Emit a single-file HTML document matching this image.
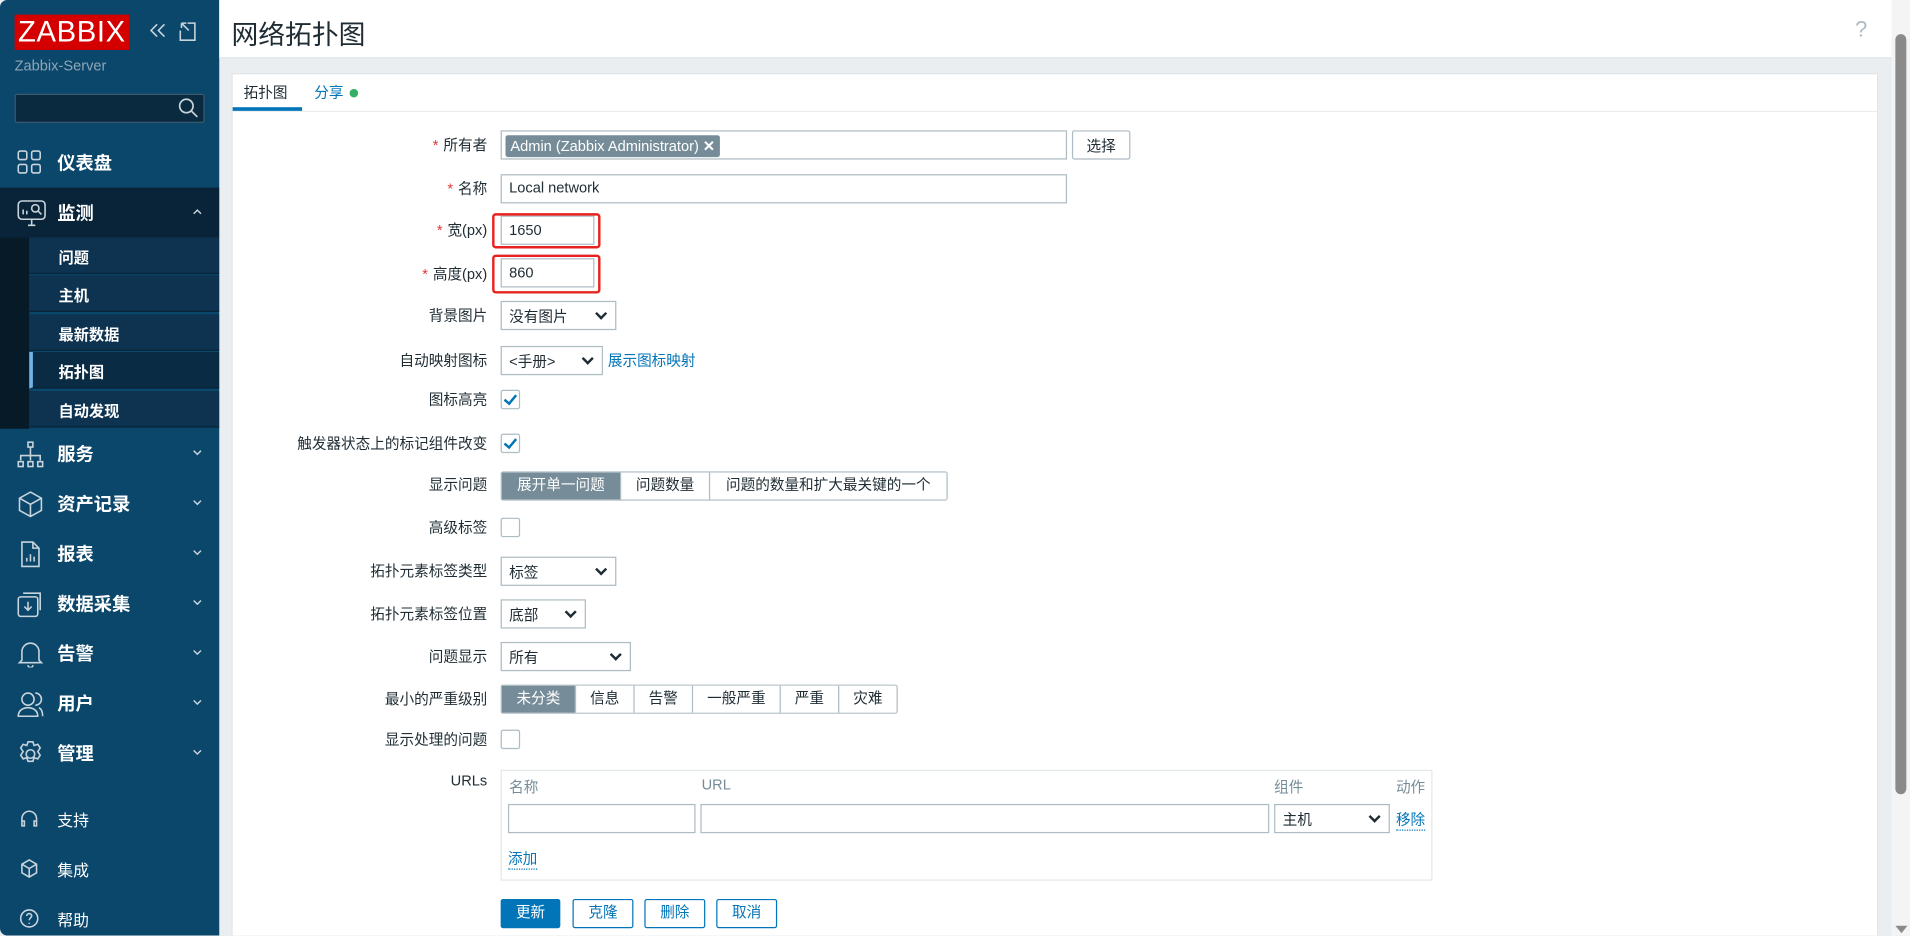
<!DOCTYPE html>
<html><head><meta charset="utf-8"><style>
*{box-sizing:border-box;margin:0;padding:0}
html,body{width:1910px;height:935px;overflow:hidden;background:#ebeef0}
#w{position:absolute;left:0;top:0;width:1568px;height:768px;overflow:hidden;transform:scale(1.2181);transform-origin:0 0;font-family:"Liberation Sans","Noto Sans CJK SC",sans-serif;font-size:12px;color:#1f2c33}
.a{position:absolute}
#sb{left:0;top:0;width:180px;height:768px;background:#0b466b;border-radius:6px 0 0 6px;overflow:hidden}
.nav{position:absolute;left:0;width:180px;height:41px;color:#fff;font-size:15px;font-weight:bold}
.nav span{position:absolute;left:47px;top:10px}
.nav svg{position:absolute;left:14px;top:10px}
.nav svg.car{left:158px;top:17px}
.sub{position:absolute;left:24px;width:156px;height:30px;background:#0e3350;border-bottom:1px solid #082436;color:#fff;font-size:12.5px;font-weight:bold;padding:6px 0 0 24px}
.lab{position:absolute;right:1168px;font-size:12px;color:#1f2c33;text-align:right;white-space:nowrap}
.lab i{color:#e33734;font-style:normal;margin-right:4px}
.inp{position:absolute;height:24px;border:1px solid #adbbc3;background:#fff;padding:3px 6px;font-size:12px}
.sel::after{content:"";position:absolute;right:8px;top:6px;width:5px;height:5px;border-right:2px solid #1f2c33;border-bottom:2px solid #1f2c33;transform:rotate(45deg)}
.cb{position:absolute;left:411px;width:16px;height:16px;border:1px solid #adbbc3;border-radius:2px;background:#fff}
.cb.c::after{content:"";position:absolute;left:4px;top:1px;width:4px;height:8px;border-right:2px solid #0275b8;border-bottom:2px solid #0275b8;transform:rotate(40deg)}
.seg{position:absolute;height:24px;display:flex;border:1px solid #adbbc3;border-radius:2px}
.seg div{padding:0 11px;line-height:21px;border-left:1px solid #adbbc3;background:#fff;text-align:center}
.seg div:first-child{border-left:none;background:#768d99;color:#fff}
.btn{position:absolute;top:738px;height:24px;border:1px solid #0275b8;border-radius:2px;color:#0275b8;background:#fff;text-align:center;line-height:21px;width:50px}
.lnk{color:#0275b8}
</style></head><body><div id="w">
<div id="sb" class="a">
 <div class="a" style="left:12px;top:12px;width:94px;height:29px;background:#d40000;color:#fff;font-size:24px;line-height:29px;text-align:center;letter-spacing:0.5px">ZABBIX</div>
 <svg class="a" style="left:123px;top:19px" width="14" height="12" viewBox="0 0 14 12" fill="none" stroke="#c8d4dc" stroke-width="1.3"><path d="M6 1L1 6l5 5M12 1L7 6l5 5"/></svg>
 <svg class="a" style="left:147px;top:18px" width="15" height="16" viewBox="0 0 15 16" fill="none" stroke="#c8d4dc" stroke-width="1.3"><path d="M2 1h4M2 1v4M2 1l6 6M7 1h6v14H1V7"/></svg>
 <div class="a" style="left:12px;top:47px;color:#8ea6b6;font-size:12px">Zabbix-Server</div>
 <div class="a" style="left:12px;top:77px;width:156px;height:24px;background:#0a2a40;border:1px solid #3a5a70;border-radius:2px"></div>
 <svg class="a" style="left:146px;top:80px" width="17" height="17" viewBox="0 0 17 17" fill="none" stroke="#c8d4dc" stroke-width="1.4"><circle cx="7" cy="7" r="5.5"/><path d="M11 11l5 5"/></svg>
 <div class="nav" style="top:113px"><svg width="20" height="20" viewBox="0 0 20 20" fill="none" stroke="#c8d4dc" stroke-width="1.3"><rect x="1" y="1" width="7" height="7" rx="1.5"/><rect x="12" y="1" width="7" height="7" rx="1.5"/><rect x="1" y="12" width="7" height="7" rx="1.5"/><rect x="12" y="12" width="7" height="7" rx="1.5"/></svg><span>仪表盘</span></div>
 <div class="nav" style="top:154px;background:#092438;height:41px"><svg width="24" height="22" viewBox="0 0 24 22" fill="none" stroke="#c8d4dc" stroke-width="1.3"><rect x="1" y="1" width="22" height="15" rx="3"/><path d="M5 12V8M8 12V9M9 21h6M12 16v5"/><circle cx="15" cy="7" r="3"/><path d="M17 9l3 3"/></svg><span>监测</span><svg class="car" width="8" height="5" viewBox="0 0 8 5" fill="none" stroke="#c8d4dc" stroke-width="1.2"><path d="M1 4.5L4 1.5 7 4.5"/></svg></div>
 <div class="a" style="left:0;top:195px;width:24px;height:157px;background:#061a28"></div>
 <div class="sub" style="top:195px">问题</div>
 <div class="sub" style="top:226px">主机</div>
 <div class="sub" style="top:258px">最新数据</div>
 <div class="sub" style="top:289px;background:#0a2b44;border-left:3px solid #6eb4e8;padding-left:21px">拓扑图</div>
 <div class="sub" style="top:321px">自动发现</div>
 <div class="nav" style="top:352px"><svg width="22" height="22" viewBox="0 0 22 22" fill="none" stroke="#c8d4dc" stroke-width="1.3"><rect x="9" y="1" width="4" height="4"/><path d="M11 5v5M3 16v-4h16v4M11 10v6"/><rect x="1" y="17" width="4" height="4"/><rect x="9" y="17" width="4" height="4"/><rect x="17" y="17" width="4" height="4"/></svg><span>服务</span><svg class="car" width="8" height="5" viewBox="0 0 8 5" fill="none" stroke="#c8d4dc" stroke-width="1.2"><path d="M1 1l3 3 3-3"/></svg></div>
 <div class="nav" style="top:393px"><svg width="22" height="22" viewBox="0 0 22 22" fill="none" stroke="#c8d4dc" stroke-width="1.3"><path d="M11 1l9 5v10l-9 5-9-5V6zM2 6l9 5 9-5M11 11v10"/></svg><span>资产记录</span><svg class="car" width="8" height="5" viewBox="0 0 8 5" fill="none" stroke="#c8d4dc" stroke-width="1.2"><path d="M1 1l3 3 3-3"/></svg></div>
 <div class="nav" style="top:434px"><svg width="22" height="22" viewBox="0 0 22 22" fill="none" stroke="#c8d4dc" stroke-width="1.3"><path d="M4 1h9l5 5v15H4zM13 1v5h5M8 17v-3M11 17v-6M14 17v-4"/></svg><span>报表</span><svg class="car" width="8" height="5" viewBox="0 0 8 5" fill="none" stroke="#c8d4dc" stroke-width="1.2"><path d="M1 1l3 3 3-3"/></svg></div>
 <div class="nav" style="top:475px"><svg width="22" height="22" viewBox="0 0 22 22" fill="none" stroke="#c8d4dc" stroke-width="1.3"><rect x="1" y="5" width="16" height="16" rx="2"/><path d="M5 2h14v14M9 9v7M6 13l3 3 3-3"/></svg><span>数据采集</span><svg class="car" width="8" height="5" viewBox="0 0 8 5" fill="none" stroke="#c8d4dc" stroke-width="1.2"><path d="M1 1l3 3 3-3"/></svg></div>
 <div class="nav" style="top:516px"><svg width="22" height="22" viewBox="0 0 22 22" fill="none" stroke="#c8d4dc" stroke-width="1.3"><path d="M4 16V9a7 7 0 0114 0v7l2 2H2zM9 20a2 2 0 004 0"/></svg><span>告警</span><svg class="car" width="8" height="5" viewBox="0 0 8 5" fill="none" stroke="#c8d4dc" stroke-width="1.2"><path d="M1 1l3 3 3-3"/></svg></div>
 <div class="nav" style="top:557px"><svg width="22" height="22" viewBox="0 0 22 22" fill="none" stroke="#c8d4dc" stroke-width="1.3"><circle cx="9" cy="7" r="5"/><path d="M1 21c0-5 4-7 8-7s8 2 8 7zM15 2a5 5 0 010 10M18 14c2 1 3 3 3 7"/></svg><span>用户</span><svg class="car" width="8" height="5" viewBox="0 0 8 5" fill="none" stroke="#c8d4dc" stroke-width="1.2"><path d="M1 1l3 3 3-3"/></svg></div>
 <div class="nav" style="top:598px"><svg width="22" height="22" viewBox="0 0 22 22" fill="none" stroke="#c8d4dc" stroke-width="1.3"><circle cx="11" cy="11" r="3.5"/><path d="M9 1h4l1 3 3-1 2 3-2 3 2 3-2 3-3-1-1 3H9l-1-3-3 1-2-3 2-3-2-3 2-3 3 1z"/></svg><span>管理</span><svg class="car" width="8" height="5" viewBox="0 0 8 5" fill="none" stroke="#c8d4dc" stroke-width="1.2"><path d="M1 1l3 3 3-3"/></svg></div>
 <div class="nav" style="top:652px;font-size:13px;font-weight:normal"><svg width="16" height="16" viewBox="0 0 16 16" fill="none" stroke="#c8d4dc" stroke-width="1.3" style="left:16px;top:12px"><path d="M2 11V8a6 6 0 0112 0v3M2 10h2v4H2zM12 10h2v4h-2z"/></svg><span style="top:11px">支持</span></div>
 <div class="nav" style="top:693px;font-size:13px;font-weight:normal"><svg width="16" height="16" viewBox="0 0 16 16" fill="none" stroke="#c8d4dc" stroke-width="1.3" style="left:16px;top:12px"><path d="M8 1l6 3.5v7L8 15l-6-3.5v-7zM2 4.5L8 8l6-3.5M8 8v7"/></svg><span style="top:11px">集成</span></div>
 <div class="nav" style="top:734px;font-size:13px;font-weight:normal"><svg width="16" height="16" viewBox="0 0 16 16" fill="none" stroke="#c8d4dc" stroke-width="1.3" style="left:16px;top:12px"><circle cx="8" cy="8" r="7"/><path d="M6 6a2 2 0 114 0c0 1.5-2 1.5-2 3.5M8 11.5v1"/></svg><span style="top:11px">帮助</span></div>
</div>
<div class="a" style="left:180px;top:0;width:1373px;height:48px;background:#fff;border-bottom:1px solid #dfe4e7"></div>
<div class="a" style="left:190px;top:11px;font-size:22px;color:#1f2c33">网络拓扑图</div>
<div class="a" style="left:1523px;top:14px;font-size:18px;color:#acbbc4">?</div>
<div class="a" style="left:190px;top:60px;width:1352px;height:740px;background:#fff;border:1px solid #dfe4e7"></div>
<div class="a" style="left:191px;top:91px;width:1350px;height:1px;background:#ebeef0"></div>
<div class="a" style="left:200px;top:67px">拓扑图</div>
<div class="a" style="left:191px;top:88px;width:57px;height:3px;background:#0275b8"></div>
<div class="a lnk" style="left:258px;top:67px">分享 <span style="display:inline-block;width:7px;height:7px;border-radius:50%;background:#34af67;margin-left:2px"></span></div>

<div class="lab" style="top:110px"><i>*</i>所有者</div>
<div class="inp" style="left:411px;top:107px;width:465px;padding:3px"><span style="background:#768d99;color:#fff;padding:1px 4px;border-radius:2px;display:inline-block;line-height:16px">Admin (Zabbix Administrator) <b>✕</b></span></div>
<div class="inp" style="left:880px;top:107px;width:48px;text-align:center;border-radius:2px">选择</div>
<div class="lab" style="top:146px"><i>*</i>名称</div>
<div class="inp" style="left:411px;top:143px;width:465px">Local network</div>
<div class="lab" style="top:180px"><i>*</i>宽(px)</div>
<div class="inp" style="left:411px;top:177px;width:77px;padding-top:4px">1650</div>
<div class="a" style="left:404px;top:175px;width:89px;height:29px;border:2px solid #e8231f;border-radius:3px"></div>
<div class="lab" style="top:216px"><i>*</i>高度(px)</div>
<div class="inp" style="left:411px;top:212px;width:77px;padding-top:4px">860</div>
<div class="a" style="left:404px;top:209px;width:89px;height:32px;border:2px solid #e8231f;border-radius:3px"></div>
<div class="lab" style="top:250px">背景图片</div>
<div class="inp sel" style="left:411px;top:247px;width:95px">没有图片</div>
<div class="lab" style="top:287px">自动映射图标</div>
<div class="inp sel" style="left:411px;top:284px;width:84px">&lt;手册&gt;</div>
<div class="a lnk" style="left:499px;top:287px">展示图标映射</div>
<div class="lab" style="top:319px">图标高亮</div><div class="cb c" style="top:320px"></div>
<div class="lab" style="top:355px">触发器状态上的标记组件改变</div><div class="cb c" style="top:356px"></div>
<div class="lab" style="top:389px">显示问题</div>
<div class="seg" style="left:411px;top:387px"><div style="width:97px">展开单一问题</div><div style="width:73px">问题数量</div><div style="width:195px">问题的数量和扩大最关键的一个</div></div>
<div class="lab" style="top:424px">高级标签</div><div class="cb" style="top:425px"></div>
<div class="lab" style="top:460px">拓扑元素标签类型</div>
<div class="inp sel" style="left:411px;top:457px;width:95px">标签</div>
<div class="lab" style="top:495px">拓扑元素标签位置</div>
<div class="inp sel" style="left:411px;top:492px;width:70px">底部</div>
<div class="lab" style="top:530px">问题显示</div>
<div class="inp sel" style="left:411px;top:527px;width:107px">所有</div>
<div class="lab" style="top:565px">最小的严重级别</div>
<div class="seg" style="left:411px;top:562px"><div style="width:60px">未分类</div><div style="width:48px">信息</div><div style="width:48px">告警</div><div style="width:72px">一般严重</div><div style="width:48px">严重</div><div style="width:48px">灾难</div></div>
<div class="lab" style="top:598px">显示处理的问题</div><div class="cb" style="top:599px"></div>
<div class="lab" style="top:634px">URLs</div>
<div class="a" style="left:411px;top:632px;width:765px;height:91px;border:1px solid #e3e8eb;background:#fff"></div>
<div class="a" style="left:418px;top:637px;color:#768d99">名称</div>
<div class="a" style="left:576px;top:637px;color:#768d99">URL</div>
<div class="a" style="left:1046px;top:637px;color:#768d99">组件</div>
<div class="a" style="left:1146px;top:637px;color:#768d99">动作</div>
<div class="inp" style="left:417px;top:660px;width:154px"></div>
<div class="inp" style="left:575px;top:660px;width:467px"></div>
<div class="inp sel" style="left:1046px;top:660px;width:95px">主机</div>
<div class="a lnk" style="left:1146px;top:664px;border-bottom:1px dotted #0275b8">移除</div>
<div class="a lnk" style="left:417px;top:696px;border-bottom:1px dotted #0275b8">添加</div>
<div class="btn" style="left:411px;width:49px;background:#0275b8;color:#fff">更新</div>
<div class="btn" style="left:470px">克隆</div>
<div class="btn" style="left:529px">删除</div>
<div class="btn" style="left:588px">取消</div>

<div class="a" style="left:1553px;top:0;width:15px;height:768px;background:#f4f4f4"></div>
<div class="a" style="left:1556px;top:28px;width:9px;height:624px;background:#8a8a8a;border-radius:5px"></div>
<div class="a" style="left:1556px;top:760px;width:0;height:0;border-left:5px solid transparent;border-right:5px solid transparent;border-top:6px solid #8a8a8a"></div>
</div></body></html>
